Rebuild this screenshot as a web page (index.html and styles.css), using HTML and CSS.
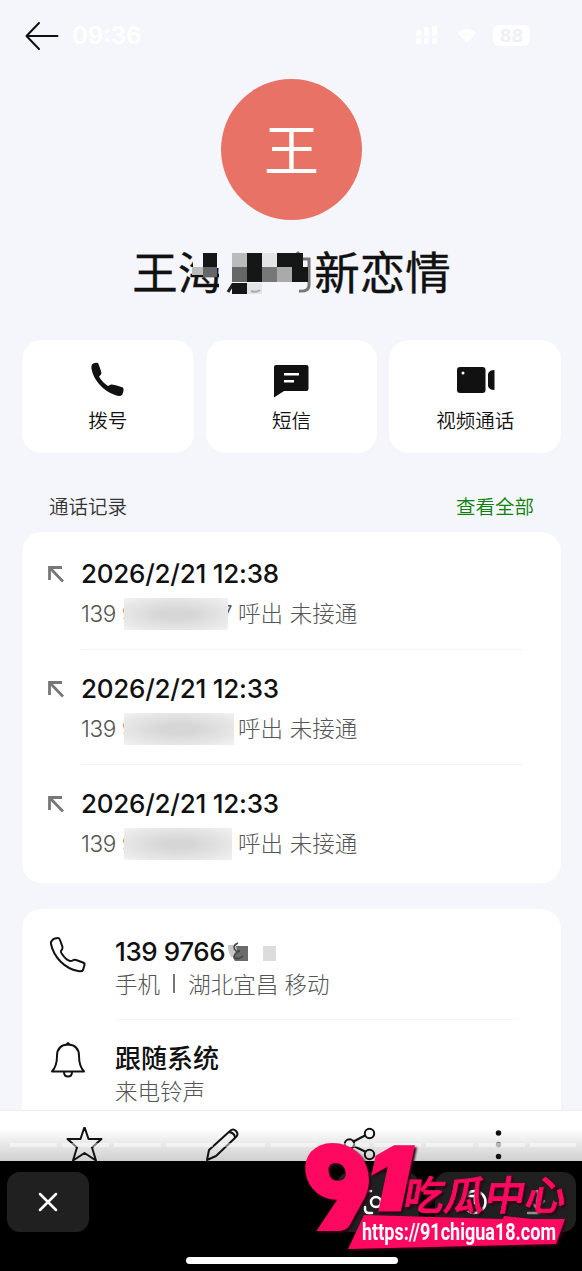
FILE: index.html
```
<!DOCTYPE html>
<html lang="zh-CN">
<head>
<meta charset="utf-8">
<title>联系人</title>
<link rel="stylesheet" href="styles.css">
</head>
<body>
<main class="screen">
  <header class="status">
    <svg class="back" width="34" height="30" viewBox="0 0 34 30"><path d="M14 2 1.500 15 14 28M1.500 15H32.500"/></svg>
    <span class="time">09:36</span>
    <span class="indicators">
      <svg width="26" height="20" viewBox="0 0 26 20" fill="#fff"><rect x="1" y="4" width="5" height="6" rx="2"/><rect x="9" y="1" width="5" height="9" rx="2"/><rect x="17" y="0" width="5" height="10" rx="2"/><rect x="1" y="12" width="5" height="6" rx="2"/><rect x="9" y="12" width="5" height="6" rx="2"/><rect x="17" y="12" width="5" height="6" rx="2"/></svg>
      <svg width="18" height="15" viewBox="0 0 18 15" fill="#fff"><path d="M0 5Q9-3 18 5L9 15Z"/><path d="M4 8Q9 4 14 8" stroke="#f5f6fb" fill="none"/></svg>
      <span class="battery">88</span>
    </span>
  </header>

  <section class="profile">
    <div class="avatar">王</div>
    <h1 class="name"><span>王海</span><span class="hidden-name"></span><span>新恋情</span>
      <svg class="mosaic" width="130" height="50" viewBox="190 248 130 50">
        <path fill="#f5f6fb" d="M193 248h26v20h-26zM219 248h96v50h-96z"/>
        <path d="M233 284 228 292" stroke="#222" stroke-width="3"/>
        <path d="M297 252l3 3M301 259h8v26q0 7-10 6" fill="none" stroke="#777" stroke-width="3"/>
        <path fill="#151717" d="M203 253h14v14h-14zM247 253h15v29h-15zM277 253h26v14h5v15h-16v-15h-15zM232 283h15v11h-15z"/>
        <path fill="#b9bbbc" d="M192 267h11v8h-11zM232 253h15v14h-15z"/>
        <path fill="#e3e4e6" d="M262 253h15v14h-15zM247 283h15v11h-15z"/>
        <path fill="#666" d="M203 267h14v10h-14zM232 267h15v15h-15z"/>
        <path fill="#777" d="M262 267h15v15h-15z"/><path fill="#aaa" d="M277 267h15v15h-15z"/>
        <path d="M251 291q5 2 9-1" stroke="#aaa" stroke-width="2" fill="none"/>
      </svg>
    </h1>
  </section>

  <nav class="actions">
    <a class="action"><svg width="40" height="40" viewBox="0 0 40 40"><path d="M4 4.500Q6 2 10 3Q11.500 6 13.500 13Q13 15 11 16.500Q14 22 20 26L23 24.500Q25 24 35 27.500Q36.500 30 34 35Q32 37 27 35Q18 32 11 24Q5 17 3.500 9Q3 6 4 4.500Z"/></svg>拨号</a>
    <a class="action"><svg width="40" height="40" viewBox="0 0 40 40"><path fill-rule="evenodd" d="M5 5H35.500Q37.500 5 37.500 7V29Q37.500 31 35.500 31H13L3 37.500V7Q3 5 5 5ZM13 13v2.500h15V13ZM13 20v2.500h10V20Z"/></svg>短信</a>
    <a class="action"><svg width="40" height="40" viewBox="0 0 40 40"><rect x="2" y="7" width="28.500" height="26" rx="3"/><path d="M33 14Q34 10 39.500 10V30Q34 30 33 26Z"/><circle cx="8" cy="13" r="1.500" fill="#fff"/></svg>视频通话</a>
  </nav>

  <div class="section-title"><span>通话记录</span><a class="all">查看全部</a></div>

  <section class="card calls">
    <article class="call"><svg class="dir" viewBox="0 0 18 18"><path d="M15 2.500H2.500V15M3 3 16 16.500"/></svg><div class="call-text"><b class="date">2026/2/21 12:38</b><p class="sub"><span class="num">139</span><span class="edge">9</span><i class="veil first"></i><span class="edge last">7</span><span class="result">呼出 未接通</span></p></div></article>
    <article class="call"><svg class="dir" viewBox="0 0 18 18"><path d="M15 2.500H2.500V15M3 3 16 16.500"/></svg><div class="call-text"><b class="date">2026/2/21 12:33</b><p class="sub"><span class="num">139</span><span class="edge">9</span><i class="veil second"></i><span class="result">呼出 未接通</span></p></div></article>
    <article class="call"><svg class="dir" viewBox="0 0 18 18"><path d="M15 2.500H2.500V15M3 3 16 16.500"/></svg><div class="call-text"><b class="date">2026/2/21 12:33</b><p class="sub"><span class="num">139</span><span class="edge">9</span><i class="veil third"></i><span class="result">呼出 未接通</span></p></div></article>
  </section>

  <section class="card details">
    <article class="detail">
      <svg class="line-icon" width="38" height="38" viewBox="0 0 38 38"><path d="M3 4.500Q5 2 9 2Q10.500 2 11 4L13.500 11Q14 13 12 15Q11.500 16 13 18Q17 24 21 25Q23 25 24.500 24Q26 23.500 27 24L34 26.500Q36 27.500 35.500 29L34 34Q33 36 29 35Q19 33 12 26Q4 18 2 8Q1.500 6 3 4.500Z"/></svg>
      <div class="detail-text"><b class="phone">139 9766<svg width="50" height="24" viewBox="0 0 50 24"><path fill="#c8c8c8" d="M2 5h8v12H5Q2 12 2 5Z"/><path fill="#6b6b6b" d="M10 6h12v15H9L7 18l4-6Z"/><path d="M12 3Q5 6 10 11H14Q9 12 8 17Q11 21 17 16" fill="none" stroke="#444" stroke-width="1.500"/><path fill="#dcdcdc" d="M37 6h14v15H37Z"/></svg></b><p>手机 <span class="pipe"></span> 湖北宜昌 移动</p></div>
    </article>
    <article class="detail">
      <svg class="line-icon" width="38" height="38" viewBox="0 0 38 38"><path d="M3 30.500Q8 25 8 15Q8 4 19 3.500Q30 4 30 15Q30 25 35 30.500ZM18 3Q19 1 20 3M15 31Q15 35.500 19 35.500Q23 35.500 23 31"/></svg>
      <div class="detail-text"><b>跟随系统</b><p>来电铃声</p></div>
    </article>
  </section>
</main>

<footer class="bottom">
  <nav class="tools">
    <svg width="38" height="38" viewBox="0 0 38 38"><path d="M19.500 0 23.500 12H36.500L27 20.500 31 33.500 19.500 26 8 33.500 12 20.500 2.500 12H15.500Z"/></svg>
    <svg width="38" height="38" viewBox="0 0 38 38"><path d="M4 33 6 23 27 4Q30 1 33 4Q36 7 33 10L13 29ZM26 5Q32 6 32 11"/></svg>
    <svg width="38" height="38" viewBox="0 0 38 38"><path d="M12.500 14.500 24 8.500M12.500 19 24 24.500"/><circle cx="28.500" cy="6.500" r="4.700"/><circle cx="8.500" cy="17" r="4.700"/><circle cx="28.500" cy="27.500" r="4.700"/></svg>
    <svg width="38" height="38" viewBox="0 0 38 38"><circle cx="19.500" cy="6" r="2"/><circle cx="19.500" cy="17.500" r="2" opacity=".5"/><circle cx="19.500" cy="29.500" r="2"/></svg>
    <div class="dashes"></div>
  </nav>
  <div class="editor">
    <button class="dark close" aria-label="关闭"><svg width="22" height="22" viewBox="0 0 22 22"><path d="M3 3 19 19M19 3 3 19"/></svg></button>
    <button class="dark scan" aria-label="识别"><svg width="30" height="30" viewBox="0 0 30 30"><circle cx="13" cy="15" r="5"/><path d="M2 20V22Q2 26 6 26H9M6 4H8"/></svg></button>
    <div class="dark pair"><svg width="28" height="28" viewBox="0 0 28 28"><path d="M6 6A11 11 0 1 1 5 21M6 2V8H12M14 7V15L18 18"/></svg><svg class="download" width="28" height="28" viewBox="0 0 28 28"><path d="M14 3V20M7 13l7 7 7-7M5 25H23"/></svg></div>
  </div>
  <div class="handle"></div>
  <svg class="brand" width="282" height="121" viewBox="300 1140 282 121">
    <g class="brand-type">
      <text class="nine" transform="translate(314 1227) skewX(9)" font-size="109" textLength="64" lengthAdjust="spacingAndGlyphs">9</text>
      <text class="one" transform="translate(363 1209) skewX(-12)" font-size="84" textLength="40" lengthAdjust="spacingAndGlyphs">1</text>
      <text class="slogan" transform="translate(402 1210) skewX(-10)" font-size="40" textLength="162" lengthAdjust="spacingAndGlyphs">吃瓜中心</text>
      <path d="M364 1215 503 1219 504 1216 532 1219H565L556 1244 348 1249Z"/>
    </g>
    <text class="url" x="362" y="1240" font-size="23" textLength="194" lengthAdjust="spacingAndGlyphs">https://91chigua18.com</text>
  </svg>
</footer>
</body>
</html>
```
FILE: styles.css
```
* { box-sizing: border-box; }
body { margin: 0; width: 582px; height: 1271px; overflow: hidden; background: #f5f6fb; color: #111; font-family: Inter, "Noto Sans CJK SC", sans-serif; }
p, h1 { margin: 0; }
svg { display: block; flex: none; }
.screen { height: 1110px; overflow: hidden; padding: 0 21px 0 22px; }
.status { height: 79px; padding: 0 31px 8px 3px; display: flex; align-items: center; }
.back, .line-icon, .tools svg { fill: none; stroke: #111; stroke-width: 2; stroke-linecap: round; stroke-linejoin: round; }
.time { margin-left: 13px; font-size: 24px; font-weight: 600; color: #fff; }
.indicators { margin-left: auto; display: flex; align-items: center; gap: 17px; }
.battery { width: 37px; height: 21px; border-radius: 6px; background: #fff; color: #eff0f4; font-size: 18px; font-weight: 700; line-height: 21px; text-align: center; }
.profile { height: 261px; display: flex; flex-direction: column; align-items: center; }
.avatar { width: 141px; height: 141px; border-radius: 50%; background: #e87266; color: #fff; display: grid; place-items: center; font-size: 55px; line-height: 1; padding-bottom: 6px; font-family: "Noto Sans CJK SC", sans-serif; }
.name { position: relative; display: flex; margin-top: 19px; height: 62px; line-height: 62px; font-family: "Noto Sans CJK SC", sans-serif; font-size: 45.500px; font-weight: 400; -webkit-text-stroke: .4px #111; }
.hidden-name { width: 91px; }
.mosaic { position: absolute; left: 58px; top: 9px; }
.actions { display: grid; grid-template-columns: repeat(3, 1fr); gap: 12px; height: 113px; }
.action { background: #fff; border-radius: 20px; display: flex; flex-direction: column; align-items: center; padding-top: 20px; font-size: 19.500px; font-weight: 350; line-height: 28px; gap: 7px; }
.action svg { fill: #111; }
.section-title { display: flex; justify-content: space-between; height: 79px; padding: 40px 27px 0; font-size: 19.500px; font-weight: 350; line-height: 28px; color: #333; }
.all { color: #0b800b; }
.card { background: #fff; border-radius: 20px; }
.calls { height: 351px; padding: 3px 38px 0 25px; }
.call { display: flex; gap: 16px; height: 115px; }
.dir { width: 18px; height: 18px; margin-top: 30px; fill: none; stroke: #777; stroke-width: 2.800; }
.call-text { flex: 1; padding-top: 21px; border-bottom: 1px solid #f4f4f5; }
.call:last-child .call-text { border: 0; }
.date { display: block; font-size: 26px; font-weight: 500; letter-spacing: -.250px; line-height: 36px; white-space: nowrap; }
.sub { display: flex; align-items: center; height: 32px; margin-top: 6px; line-height: 32px; font-size: 22.500px; font-weight: 300; color: #555; }
.num { width: 41px; letter-spacing: -.400px; }
.edge { width: 2px; height: 32px; }
.edge.last { width: 11px; margin-left: -8px; }
.veil { position: relative; z-index: 1; height: 32px; background: radial-gradient(ellipse, #d6d6d6 20%, #e8e8e8 75%, #f3f3f3); }
.first { width: 104px; }
.second { width: 110px; }
.third { width: 108px; }
.result { margin-left: auto; width: 285px; white-space: nowrap; word-spacing: .5px; }
.details { height: 230px; margin-top: 26px; padding: 0 42px 0 27px; }
.detail { display: flex; gap: 28px; height: 111px; }
.line-icon { margin-top: 27px; }
.detail-text { flex: 1; padding-top: 25px; border-bottom: 1px solid #f6f6f7; }
.detail + .detail { height: 105px; }
.detail + .detail .line-icon { margin-top: 21px; }
.detail + .detail .detail-text { padding-top: 21px; border: 0; }
.detail b { display: flex; align-items: center; font-size: 26px; font-weight: 500; letter-spacing: -.400px; line-height: 36px; height: 36px; }
.detail + .detail b { letter-spacing: 0; }
.phone svg { margin-left: 1px; }
.detail p { font-size: 22.500px; font-weight: 300; line-height: 30px; color: #555; }
.pipe { display: inline-block; width: 1.500px; height: 19px; margin: 0 7px; background: #777; }
.bottom { position: relative; height: 161px; background: #000; }
.tools { position: relative; display: flex; gap: 100px; height: 51px; padding: 16px 65px 0; overflow: hidden; background: linear-gradient(#fff 35%, #cfcfcf); border-top: 1px solid #eee; }
.tools svg:last-of-type { fill: #111; stroke-width: 1.500; }
.dashes { position: absolute; left: 10px; right: 6px; top: 32px; height: 4px; opacity: .45; background: repeating-linear-gradient(90deg, #fff 0 47px, transparent 47px 52px); }
.editor { display: flex; height: 71px; padding: 11px 6px 0 7px; }
.dark { height: 60px; border: 0; border-radius: 13px; background: #202020; display: flex; align-items: center; justify-content: center; padding: 0; }
.dark svg { fill: none; stroke: #fff; stroke-width: 2.500; stroke-linecap: round; }
.close { width: 82px; }
.scan { width: 82px; margin-left: 248px; }
.pair { width: 141px; margin-left: auto; gap: 34px; }
.pair .download { opacity: .5; }
.handle { width: 212px; height: 7px; margin: 25px 0 0 186px; border-radius: 4px; background: #fff; }
.brand { position: absolute; left: 300px; top: 30px; overflow: visible; }
.brand-type { fill: #ff0860; filter: drop-shadow(2px 2px 1px #300014); }
.nine, .one { font-family: Lato, sans-serif; font-weight: 900; stroke: #ff0860; stroke-width: 8px; }
.one { font-family: Inter, sans-serif; stroke-width: 5px; }
.slogan { font-family: "Noto Sans CJK SC", sans-serif; font-weight: 500; stroke: #ff0860; stroke-width: .8px; }
.url { font-family: Roboto, sans-serif; font-weight: 700; fill: #fff; }
```
